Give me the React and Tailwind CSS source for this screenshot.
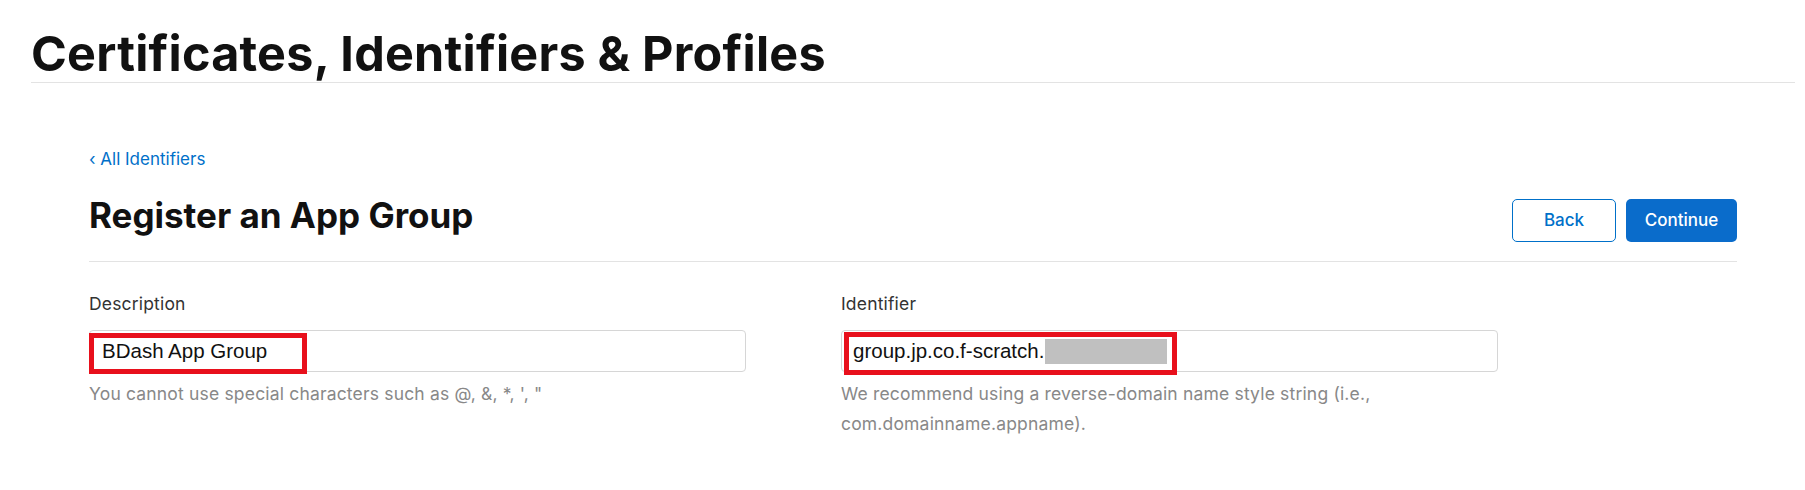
const inputText = "font-['Liberation_Sans',Arial,sans-serif] text-[20.5px] text-[#111]";

const Field = ({ label, children, help }) => (
  <div className="w-[657px] shrink-0">
    <div className="text-[17.5px] leading-[22px] tracking-[0.01em] text-[#333]">{label}</div>
    <div className="relative mt-[15px] h-[42px] rounded-[4px] border border-[#d6d6d6] bg-white">
      {children}
    </div>
    <div className="mt-[7px] text-[17.5px] leading-[30px] tracking-[0.01em] text-[#888]">{help}</div>
  </div>
);

const App = () => {
  return (
    <div className="min-h-[490px] w-full bg-white font-['Inter',sans-serif] text-[#111]">
      <header className="ml-[31px] mr-[10px] border-b border-[#e3e3e3] pt-[26px]">
        <h1 className="text-[48.5px] font-bold leading-[56px] tracking-[0.005em]">
          Certificates, Identifiers &amp; Profiles
        </h1>
      </header>

      <section className="ml-[89px] w-[1648px] pt-[64px]">
        <a className="block text-[17px] leading-[24px] text-[#0070c9]" href="#">
          ‹ All Identifiers
        </a>

        <div className="mt-[24px] flex items-start justify-between border-b border-[#e3e3e3] pb-[19px]">
          <h2 className="text-[35px] font-bold leading-[40px]">Register an App Group</h2>
          <div className="mt-[4px] flex gap-[10px]">
            <button className="h-[43px] w-[104px] rounded-[5px] border border-[#0070c9] bg-white text-[17px] font-medium text-[#0070c9]">
              Back
            </button>
            <button className="h-[43px] w-[111px] rounded-[5px] bg-[#0a6ccb] text-[17px] font-medium text-white">
              Continue
            </button>
          </div>
        </div>

        <div className="mt-[31px] flex gap-[95px]">
          <Field label="Description" help={"You cannot use special characters such as @, &, *, ', \""}>
            <div className={"flex h-full items-center pl-[12px] " + inputText}>BDash App Group</div>
            {/* annotation box */}
            <div className="absolute left-[-1px] top-[2px] h-[41px] w-[218px] border-[5px] border-[#e8101c]" />
          </Field>

          <Field
            label="Identifier"
            help={
              <>
                We recommend using a reverse-domain name style string (i.e.,
                <br />
                com.domainname.appname).
              </>
            }
          >
            <div className={"flex h-full items-center pl-[11px] " + inputText}>
              group.jp.co.f-scratch.
              <span className="ml-[1px] inline-block h-[25px] w-[122px] bg-[#c0c0c0]" />
            </div>
            <div className="absolute left-[2px] top-[1px] h-[43px] w-[333px] border-[5px] border-[#e8101c]" />
          </Field>
        </div>
      </section>
    </div>
  );
};

export default App;
